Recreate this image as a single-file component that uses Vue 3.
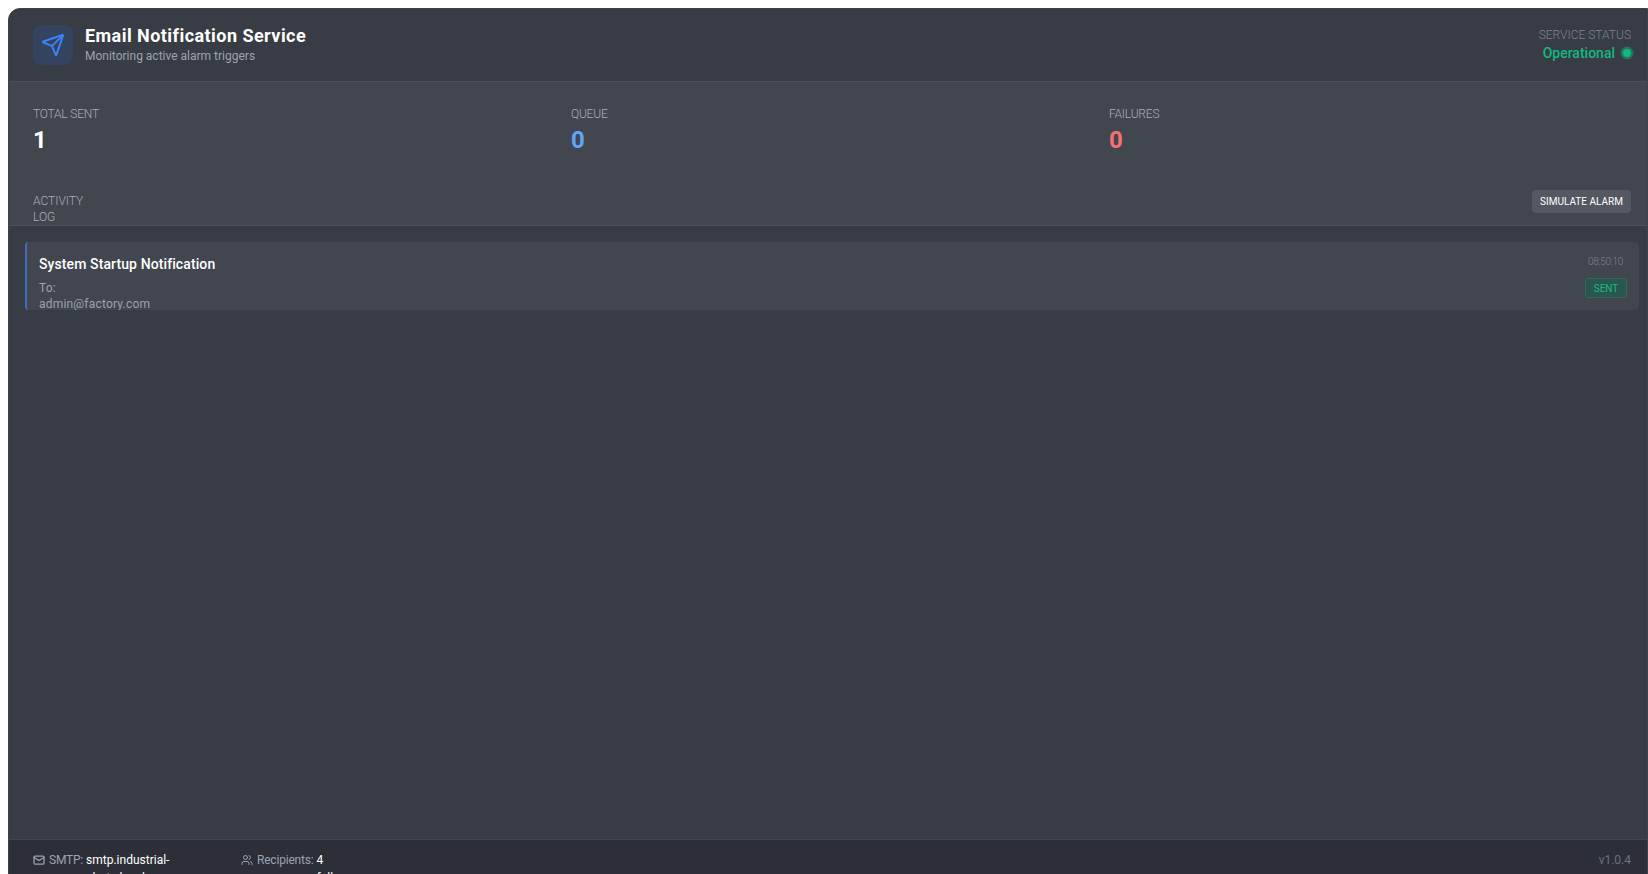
<script setup>
import { ref } from 'vue';

const stats = ref([
  { label: 'Total Sent', value: 1, tone: 'white' },
  { label: 'Queue', value: 0, tone: 'blue' },
  { label: 'Failures', value: 0, tone: 'red' },
]);

const logs = ref([
  { id: 1, subject: 'System Startup Notification', to: 'admin@factory.com', time: '08:50:10', status: 'SENT' },
]);
</script>

<template>
  <div class="panel">
    <header class="head">
      <div class="brand">
        <div class="brand-icon">
          <svg viewBox="0 0 24 24" width="24" height="24" fill="none" stroke="currentColor" stroke-width="2" stroke-linecap="round" stroke-linejoin="round">
            <path d="M14.536 21.686a.5.5 0 0 0 .937-.024l6.5-19a.496.496 0 0 0-.635-.635l-19 6.5a.5.5 0 0 0-.024.937l7.93 3.18a2 2 0 0 1 1.112 1.11z" />
            <path d="m21.854 2.147-10.94 10.939" />
          </svg>
        </div>
        <div class="brand-text">
          <h1>Email Notification Service</h1>
          <p>Monitoring active alarm triggers</p>
        </div>
      </div>
      <div class="status">
        <div class="status-label">Service Status</div>
        <div class="status-value">Operational <span class="dot"></span></div>
      </div>
    </header>

    <section class="summary">
      <div class="stats">
        <div v-for="s in stats" :key="s.label" class="stat">
          <div class="stat-label">{{ s.label }}</div>
          <div class="stat-value" :class="s.tone">{{ s.value }}</div>
        </div>
      </div>
      <div class="log-head">
        <div class="log-title">Activity<br />Log</div>
        <button class="sim">Simulate Alarm</button>
      </div>
    </section>

    <main class="list">
      <article v-for="l in logs" :key="l.id" class="item">
        <div class="item-main">
          <div class="subject">{{ l.subject }}</div>
          <div class="to">To:<br />{{ l.to }}</div>
        </div>
        <div class="item-side">
          <div class="time">{{ l.time }}</div>
          <span class="badge">{{ l.status }}</span>
        </div>
      </article>
    </main>

    <footer class="foot">
      <div class="foot-left">
        <div class="foot-item smtp">
          <svg viewBox="0 0 24 24" width="12" height="12" fill="none" stroke="currentColor" stroke-width="2.5" stroke-linecap="round" stroke-linejoin="round">
            <rect x="2" y="4" width="20" height="16" rx="2" />
            <path d="m22 7-10 6L2 7" />
          </svg>
          <span class="foot-label">SMTP:</span>
          <b>smtp.industrial-<br />alerts.local</b>
        </div>
        <div class="foot-item rcpt">
          <svg viewBox="0 0 24 24" width="12" height="12" fill="none" stroke="currentColor" stroke-width="2" stroke-linecap="round" stroke-linejoin="round">
            <path d="M16 21v-2a4 4 0 0 0-4-4H6a4 4 0 0 0-4 4v2" />
            <circle cx="9" cy="7" r="4" />
            <path d="M22 21v-2a4 4 0 0 0-3-3.87" />
            <path d="M16 3.13a4 4 0 0 1 0 7.75" />
          </svg>
          <span class="foot-label">Recipients:</span>
          <b>4<br />full</b>
        </div>
      </div>
      <div class="version">v1.0.4</div>
    </footer>
  </div>
</template>

<style>
html, body {
  margin: 0;
  height: 100%;
  overflow: hidden;
  background: #fff;
}
</style>

<style scoped>
.panel {
  margin: 8px 0 0 8px;
  width: 1640px;
  height: 891px;
  box-sizing: border-box;
  border: 1px solid #3f434b;
  display: flex;
  flex-direction: column;
  background: #383c44;
  border-top-left-radius: 12px;
  font-family: Roboto, "Open Sans", sans-serif;
  color: #fff;
}
.head {
  display: flex;
  justify-content: space-between;
  align-items: center;
  height: 72px;
  flex: none;
  padding: 0 16px 0 24px;
  border-bottom: 1px solid #4b4f58;
}
.brand { display: flex; align-items: center; gap: 12px; }
.brand-text { margin-bottom: 2px; }
.brand-icon {
  width: 40px;
  height: 40px;
  border-radius: 8px;
  background: #34435f;
  color: #3b82f6;
  display: flex;
  align-items: center;
  justify-content: center;
}
h1 { margin: 0 0 1px; font-size: 18px; line-height: 23px; font-weight: 700; letter-spacing: .45px; }
.brand p { margin: 0; font-size: 12px; line-height: 16px; color: #9ca3af; }
.status { text-align: right; }
.status-label { font-size: 12px; line-height: 16px; font-weight: 300; color: #7d8490; text-transform: uppercase; }
.status-value { display: flex; align-items: center; justify-content: flex-end; gap: 8px; font-size: 14px; line-height: 20px; font-weight: 500; color: #10b981; }
.dot { width: 8px; height: 8px; border-radius: 50%; background: #10b981; box-shadow: 0 0 0 2.5px rgba(16, 185, 129, .45); }

.summary { background: #42464f; border-bottom: 1px solid #4b4f58; flex: none; }
.stats {
  display: grid;
  grid-template-columns: repeat(3, 1fr);
  padding: 24px 24px 0;
  gap: 24px;
}
.stat-label { font-size: 12px; line-height: 16px; font-weight: 300; color: #a9afba; text-transform: uppercase; letter-spacing: -.2px; }
.stat-value { font-size: 24px; line-height: 32px; font-weight: 700; margin-top: 2px; }
.white { color: #fff; }
.blue { color: #60a5fa; }
.red { color: #f87171; }
.log-head {
  display: flex;
  justify-content: space-between;
  align-items: flex-start;
  box-sizing: border-box;
  padding: 34px 16px 0 24px;
  height: 69px;
}
.log-title { font-size: 12px; line-height: 16px; font-weight: 300; color: #a9afba; text-transform: uppercase; margin-top: 3px; }
.sim {
  border: 0;
  border-radius: 4px;
  background: #545862;
  color: #fff;
  font: inherit;
  font-size: 10px;
  line-height: 14px;
  padding: 0;
  width: 99px;
  height: 23px;
  white-space: nowrap;
  text-transform: uppercase;
}

.list { flex: 1; padding: 16px 8px 0 16px; min-height: 0; }
.item {
  display: flex;
  justify-content: space-between;
  height: 68px;
  background: #42464f;
  border-left: 2px solid #3f6cc0;
  border-radius: 4px;
  box-sizing: border-box;
  overflow: hidden;
}
.item-main { padding: 12px 0 0 12px; }
.subject { font-size: 14px; line-height: 20px; font-weight: 500; letter-spacing: .1px; }
.to { font-size: 12px; line-height: 16px; color: #9ca3af; margin-top: 6px; letter-spacing: .2px; }
.item-side { display: flex; flex-direction: column; align-items: flex-end; padding: 13px 12px 0 0; }
.time { font-size: 10px; line-height: 14px; font-weight: 300; color: #7d8490; margin-right: 4px; letter-spacing: -.3px; }
.badge {
  margin-top: 9px;
  box-sizing: border-box;
  width: 42px;
  height: 20px;
  text-align: center;
  font-size: 10px;
  line-height: 19px;
  border-radius: 3px;
  color: #22b886;
  background: #29564f;
  border: 1px solid #2d6a5a;
}

.foot {
  display: flex;
  justify-content: space-between;
  align-items: flex-start;
  background: #2c2f37;
  border-top: 1px solid #42464f;
  padding: 11px 16px 11px 24px;
  flex: none;
  font-size: 12px;
  line-height: 18px;
  color: #9ca3af;
}
.foot-left { display: flex; gap: 24px; }
.foot-item { display: flex; align-items: flex-start; gap: 3px; width: 184px; }
.foot-item svg { margin: 3px 1px 0 0; flex: none; }
.foot-label { letter-spacing: -.2px; }
.foot-item b { color: #fff; font-weight: 400; }
.version { color: #6b7280; }
</style>
